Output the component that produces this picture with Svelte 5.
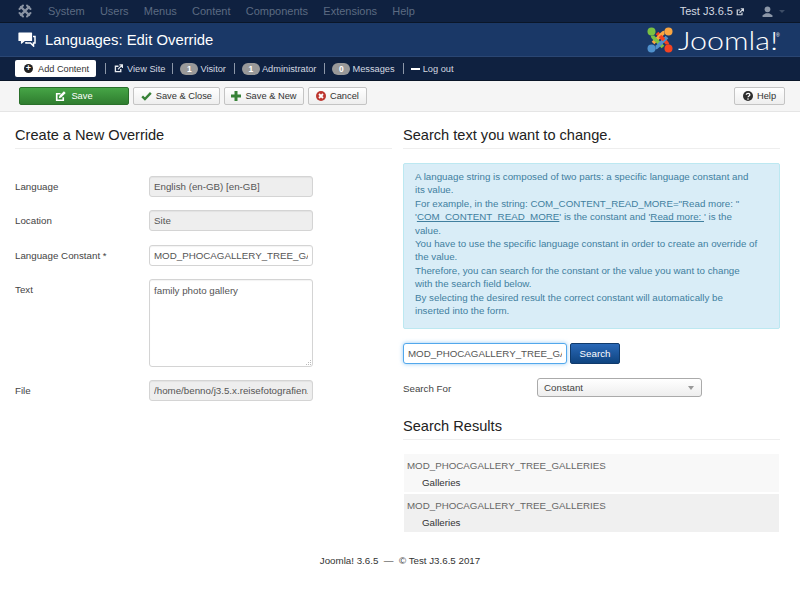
<script>
	// Joomla 3 admin: language override edit screen.
	const menu = ["System", "Users", "Menus", "Content", "Components", "Extensions", "Help"];
	const results = [
		{ key: "MOD_PHOCAGALLERY_TREE_GALLERIES", value: "Galleries" },
		{ key: "MOD_PHOCAGALLERY_TREE_GALLERIES", value: "Galleries" }
	];
	const constant = "MOD_PHOCAGALLERY_TREE_GALLERIES";
</script>

{#snippet external(color, size)}
	<svg class="ico" width={size} height={size} viewBox="0 0 16 16" aria-hidden="true">
		<path d="M12 9v4.5H2.5V4H8" fill="none" stroke={color} stroke-width="2.4" />
		<path d="M7 9.5 14 2.5M9.5 1.5h5.5V7" fill="none" stroke={color} stroke-width="2.2" />
	</svg>
{/snippet}

<div class="page">
	<nav class="topbar">
		<svg class="brand" width="14" height="14" viewBox="0 0 14 14" aria-hidden="true">
			<g fill="none" stroke="#8a94a4" stroke-linecap="round">
				<path d="M3 3 11 11M11 3 3 11" stroke-width="2.4" />
				<path d="M1.500 5 5 1.500M9 1.500 12.500 5M12.500 9 9 12.500M5 12.500 1.500 9" stroke-width="2" />
			</g>
		</svg>
		<ul class="menu">
			{#each menu as item}
				<li>{item}</li>
			{/each}
		</ul>
		<span class="site">Test J3.6.5 {@render external("#d4d9e1", 8)}</span>
		<svg class="user" width="11" height="11" viewBox="0 0 10 10" aria-hidden="true">
			<circle cx="5" cy="3" r="2.600" fill="#8c97a8" />
			<path d="M0.500 10V8.500L3.500 6.500H6.500L9.500 8.500V10Z" fill="#8c97a8" />
		</svg>
		<span class="caret"></span>
	</nav>

	<header class="title">
		<svg class="chat" width="18" height="15" viewBox="0 0 18 15" aria-hidden="true">
			<path d="M1 1H13.500V8.500H6.500L3.500 11V8.500H1Z" fill="#fff" stroke="#fff" stroke-width="1.200" stroke-linejoin="round" />
			<path d="M15 4.500H17V11H15.500V14L12.500 11H8V10" fill="none" stroke="#fff" stroke-width="1.500" />
		</svg>
		<h1>Languages: Edit Override</h1>
		<div class="logo">
			<svg width="28" height="28" viewBox="0 0 28 28" aria-hidden="true">
				<g fill="none" stroke-width="3.800">
					<path d="M21.500 18.500C21.500 17 20 16 18 14L11 7" stroke="#f44321" />
					<path d="M18.500 6.500C17 6.500 16 8 14 10L7 17" stroke="#f9a541" />
					<path d="M6.500 9.500C6.500 11 8 12 10 14L17 21" stroke="#7ac143" />
					<path d="M9.500 21.500C11 21.500 12 20 14 18L21 11" stroke="#5091cd" />
					<path d="M14 10 18 14" stroke="#f44321" />
				</g>
				<circle cx="5.500" cy="5.500" r="4" fill="#7ac143" />
				<circle cx="22.500" cy="5.500" r="4" fill="#f9a541" />
				<circle cx="22.500" cy="22.500" r="4" fill="#f44321" />
				<circle cx="5.500" cy="22.500" r="4" fill="#5091cd" />
			</svg>
			<span class="wordmark">Joomla!</span><sup>®</sup>
		</div>
	</header>

	<div class="status">
		<span class="add"><span class="plus">+</span>Add Content</span>
		<span class="sep first"></span>
		<span class="st view">{@render external("#e8ebf0", 9)} View Site</span>
		<span class="sep second"></span>
		<span class="st"><b class="badge">1</b>Visitor</span>
		<span class="sep"></span>
		<span class="st"><b class="badge">1</b>Administrator</span>
		<span class="sep"></span>
		<span class="st"><b class="badge">0</b>Messages</span>
		<span class="sep"></span>
		<span class="st"><i class="minus"></i>Log out</span>
	</div>

	<div class="toolbar">
		<button class="btn save">
			<svg class="ico" width="11" height="11" viewBox="0 0 16 16" aria-hidden="true">
				<path d="M12 9v4.500H2.500V4H8" fill="none" stroke="#fff" stroke-width="2.400" />
				<path d="M5.500 10.500 6.500 7 13 0.500 15.500 3 9 9.500Z" fill="#fff" />
			</svg>
			Save
		</button>
		<button class="btn">
			<svg class="ico" width="11" height="10" viewBox="0 0 14 12" aria-hidden="true">
				<path d="M1.500 6.500 5 10 12.500 2" fill="none" stroke="#378137" stroke-width="3" />
			</svg>
			Save &amp; Close
		</button>
		<button class="btn">
			<svg class="ico" width="10" height="10" viewBox="0 0 10 10" aria-hidden="true">
				<path d="M5 0V10M0 5H10" stroke="#378137" stroke-width="3" />
			</svg>
			Save &amp; New
		</button>
		<button class="btn">
			<svg class="ico" width="10" height="10" viewBox="0 0 10 10" aria-hidden="true">
				<circle cx="5" cy="5" r="5" fill="#bd362f" />
				<path d="M3 3 7 7M7 3 3 7" stroke="#fff" stroke-width="1.800" />
			</svg>
			Cancel
		</button>
		<button class="btn help">
			<svg class="ico" width="10" height="10" viewBox="0 0 10 10" aria-hidden="true">
				<circle cx="5" cy="5" r="5" fill="#2d2d2d" />
				<path d="M3.300 3.800C3.300 1.800 6.900 1.800 6.900 3.800 6.900 5 5 5 5 6.300" fill="none" stroke="#fff" stroke-width="1.300" />
				<circle cx="5" cy="8" r="0.800" fill="#fff" />
			</svg>
			Help
		</button>
	</div>

	<main class="content">
		<section class="left">
			<h2>Create a New Override</h2>
			<div class="form">
				<label for="f-lang">Language</label>
				<input id="f-lang" class="off" value="English (en-GB) [en-GB]" readonly />
				<label for="f-loc">Location</label>
				<input id="f-loc" class="off" value="Site" readonly />
				<label for="f-const">Language Constant *</label>
				<input id="f-const" value={constant} readonly />
				<label for="f-text">Text</label>
				<div class="area">
					<textarea id="f-text" readonly>family photo gallery</textarea>
					<svg class="grip" width="7" height="7" viewBox="0 0 7 7" aria-hidden="true">
						<path d="M5 6h1v-1h-1zM3 6h1v-1h-1zM1 6h1v-1h-1zM5 4h1v-1h-1zM3 4h1v-1h-1zM5 2h1v-1h-1z" fill="#bbb" />
					</svg>
				</div>
				<label for="f-file">File</label>
				<input id="f-file" class="off" value="/home/benno/j3.5.x.reisefotografien." readonly />
			</div>
		</section>

		<section class="right">
			<h2>Search text you want to change.</h2>
			<div class="info">
				A language string is composed of two parts: a specific language constant and its value.<br />
				For example, in the string: COM_CONTENT_READ_MORE="Read more: " '<u>COM_CONTENT_READ_MORE</u>' is the constant and '<u>Read more:&nbsp;</u>' is the value.<br />
				You have to use the specific language constant in order to create an override of the value.<br />
				Therefore, you can search for the constant or the value you want to change with the search field below.<br />
				By selecting the desired result the correct constant will automatically be inserted into the form.
			</div>
			<div class="search">
				<input class="focus" value={constant} readonly />
				<button class="btn go">Search</button>
			</div>
			<div class="for">
				<span class="for-label">Search For</span>
				<div class="select">Constant<span class="arrow"></span></div>
			</div>
			<h2 class="results-h">Search Results</h2>
			<ul class="results">
				{#each results as r}
					<li>
						<div class="key">{r.key}</div>
						<div class="val">{r.value}</div>
					</li>
				{/each}
			</ul>
		</section>
	</main>

	<footer>Joomla! 3.6.5 &nbsp;— &nbsp;© Test J3.6.5 2017</footer>
</div>

<style>
	:global(body) {
		margin: 0;
		background: #fff;
	}

	.page {
		height: 611px;
		overflow: hidden;
		font-family: "Liberation Sans", Arial, sans-serif;
		font-size: 9.75px;
		line-height: 14px;
		color: #333;
		box-sizing: border-box;
	}

	.ico {
		display: inline-block;
		vertical-align: -1px;
	}

	.topbar {
		height: 23px;
		background: #0f2140;
		border-bottom: 1px solid #0a1628;
		display: flex;
		align-items: center;
		padding-left: 18px;
		box-sizing: border-box;
		color: #d4d9e1;
	}

	.brand {
		margin-right: 16px;
	}

	.menu {
		display: flex;
		gap: 15.2px;
		list-style: none;
		margin: 0;
		padding: 0;
		flex: 1;
		font-size: 11px;
		color: #5c6b82;
	}

	.site {
		font-size: 11px;
	}

	.user {
		margin-left: 18px;
		margin-right: 6px;
	}

	.caret {
		width: 0;
		height: 0;
		border: 3px solid transparent;
		border-top-color: #3d4d66;
		border-bottom: 0;
		margin-right: 15px;
	}

	.title {
		height: 34px;
		background: #1a3867;
		border-bottom: 1px solid #2a4673;
		display: flex;
		align-items: center;
		padding-left: 18px;
		box-sizing: border-box;
		color: #fff;
	}

	.chat {
		margin-right: 9px;
	}

	h1 {
		flex: 1;
		margin: 0;
		padding-top: 1px;
		font-size: 14.85px;
		font-weight: 400;
	}

	.logo {
		display: flex;
		align-items: center;
		width: 136px;
		margin-right: 18px;
	}

	.wordmark {
		font-family: Lato, "Liberation Sans", sans-serif;
		font-weight: 300;
		font-size: 25px;
		line-height: 28px;
		margin-left: 4px;
		transform: scaleX(1.22);
		transform-origin: left center;
		width: 98px;
		color: #fff;
	}

	sup {
		font-size: 5px;
		line-height: 6px;
		align-self: flex-start;
		margin-top: 6px;
	}

	.status {
		height: 24px;
		background: #0f2140;
		border-bottom: 1px solid #0a1628;
		display: flex;
		align-items: center;
		padding-left: 15px;
		box-sizing: border-box;
		color: #d4d9e1;
		font-size: 9.25px;
	}

	.add {
		width: 81px;
		height: 17px;
		background: #fff;
		border-radius: 2px;
		color: #333;
		font-size: 9.2px;
		display: flex;
		align-items: center;
		box-sizing: border-box;
		padding-left: 9px;
	}

	.plus {
		width: 9px;
		height: 9px;
		border-radius: 50%;
		background: #222;
		color: #fff;
		font-size: 9px;
		line-height: 9px;
		font-weight: 700;
		text-align: center;
		margin-right: 5px;
	}

	.sep {
		width: 1px;
		height: 11px;
		background: #8c97a8;
		margin: 0 7px 0 8px;
	}

	.sep.first {
		margin: 0 8px 0 9px;
	}

	.sep.second {
		margin-left: 7px;
	}

	.st {
		display: flex;
		align-items: center;
		gap: 2px;
	}

	.view {
		gap: 4px;
	}

	.badge {
		width: 18px;
		height: 12px;
		border-radius: 6px;
		background: #999;
		color: #fff;
		text-align: center;
		line-height: 12px;
		font-size: 8.500px;
	}

	.minus {
		width: 9px;
		height: 2px;
		background: #fff;
		margin-right: 1px;
	}

	.toolbar {
		height: 31px;
		background: #f5f5f5;
		border-bottom: 1px solid #e5e5e5;
		display: flex;
		align-items: center;
		gap: 4px;
		padding: 0 15px 0 19px;
		box-sizing: border-box;
	}

	.btn {
		height: 18px;
		padding: 0 6.7px;
		font: inherit;
		font-size: 9.3px;
		color: #333;
		background: linear-gradient(#fff, #eee);
		border: 1px solid #c4c4c4;
		border-radius: 2px;
		display: inline-flex;
		align-items: center;
		justify-content: center;
		gap: 4px;
		white-space: nowrap;
	}

	.save {
		width: 110px;
		color: #fff;
		background: linear-gradient(#46a546, #2f7d2f);
		border-color: #2a6f2a;
		gap: 5px;
	}

	.help {
		margin-left: auto;
		width: 51px;
	}

	.content {
		display: grid;
		grid-template-columns: 377px 377px;
		gap: 11px;
		padding: 0 20px 0 15px;
	}

	h2 {
		margin: 0;
		font-size: 14.6px;
		line-height: 18px;
		font-weight: 400;
		color: #222;
		padding: 14px 0 4px;
		border-bottom: 1px solid #eee;
	}

	.form {
		display: grid;
		grid-template-columns: 134px 164px;
		row-gap: 13.25px;
		align-items: start;
		margin-top: 27px;
	}

	label {
		padding-top: 4px;
		color: #444;
	}

	input,
	textarea {
		font: inherit;
		color: #555;
		width: 100%;
		height: 21px;
		padding: 0 4px;
		box-sizing: border-box;
		border: 1px solid #d4d4d4;
		border-radius: 3px;
		background: #fff;
		outline: none;
		box-shadow: inset 0 1px 1px rgba(0, 0, 0, 0.05);
	}

	.off {
		background: #eee;
	}

	.area {
		position: relative;
		height: 88px;
	}

	textarea {
		height: 88px;
		padding-top: 4px;
		margin: 0;
		display: block;
		resize: none;
	}

	.grip {
		position: absolute;
		right: 1px;
		bottom: 1px;
	}

	.info {
		margin-top: 14px;
		padding: 6px 21px 11px 11px;
		background: #d9edf7;
		border: 1px solid #bce8f1;
		border-radius: 2px;
		color: #41809f;
		line-height: 13.400px;
	}

	.search {
		display: flex;
		gap: 3px;
		margin-top: 14px;
	}

	.focus {
		width: 164px;
		border-color: #52a8ec;
		box-shadow: 0 0 4px rgba(82, 168, 236, 0.6);
	}

	.go {
		height: 21px;
		width: 50px;
		color: #fff;
		background: linear-gradient(#2a69b8, #0f4480);
		border-color: #103a6b;
		font-size: 9.75px;
	}

	.for {
		display: flex;
		align-items: center;
		margin-top: 14px;
	}

	.for-label {
		width: 134px;
		padding-top: 2px;
		color: #444;
	}

	.select {
		position: relative;
		width: 165px;
		height: 19px;
		line-height: 17px;
		padding-left: 6px;
		box-sizing: border-box;
		border: 1px solid #aaa;
		border-radius: 3px;
		background: linear-gradient(#fff, #eee);
		color: #444;
	}

	.arrow {
		position: absolute;
		right: 7px;
		top: 7px;
		border: 3px solid transparent;
		border-top: 4px solid #999;
		border-bottom: 0;
	}

	.results-h {
		padding-top: 20px;
		padding-bottom: 4px;
	}

	.results {
		list-style: none;
		margin: 14px 1px 0;
		padding: 0;
		display: flex;
		flex-direction: column;
		gap: 2px;
	}

	.results li {
		background: #f8f8f8;
		height: 38px;
		padding: 4px 3px 0;
		box-sizing: border-box;
	}

	.results li:nth-child(2) {
		background: #f0f0f0;
	}

	.key {
		color: #666;
		line-height: 15px;
	}

	.val {
		margin: 3px 0 0 15px;
		color: #333;
	}

	footer {
		text-align: center;
		margin-top: 22px;
		color: #333;
	}
</style>
